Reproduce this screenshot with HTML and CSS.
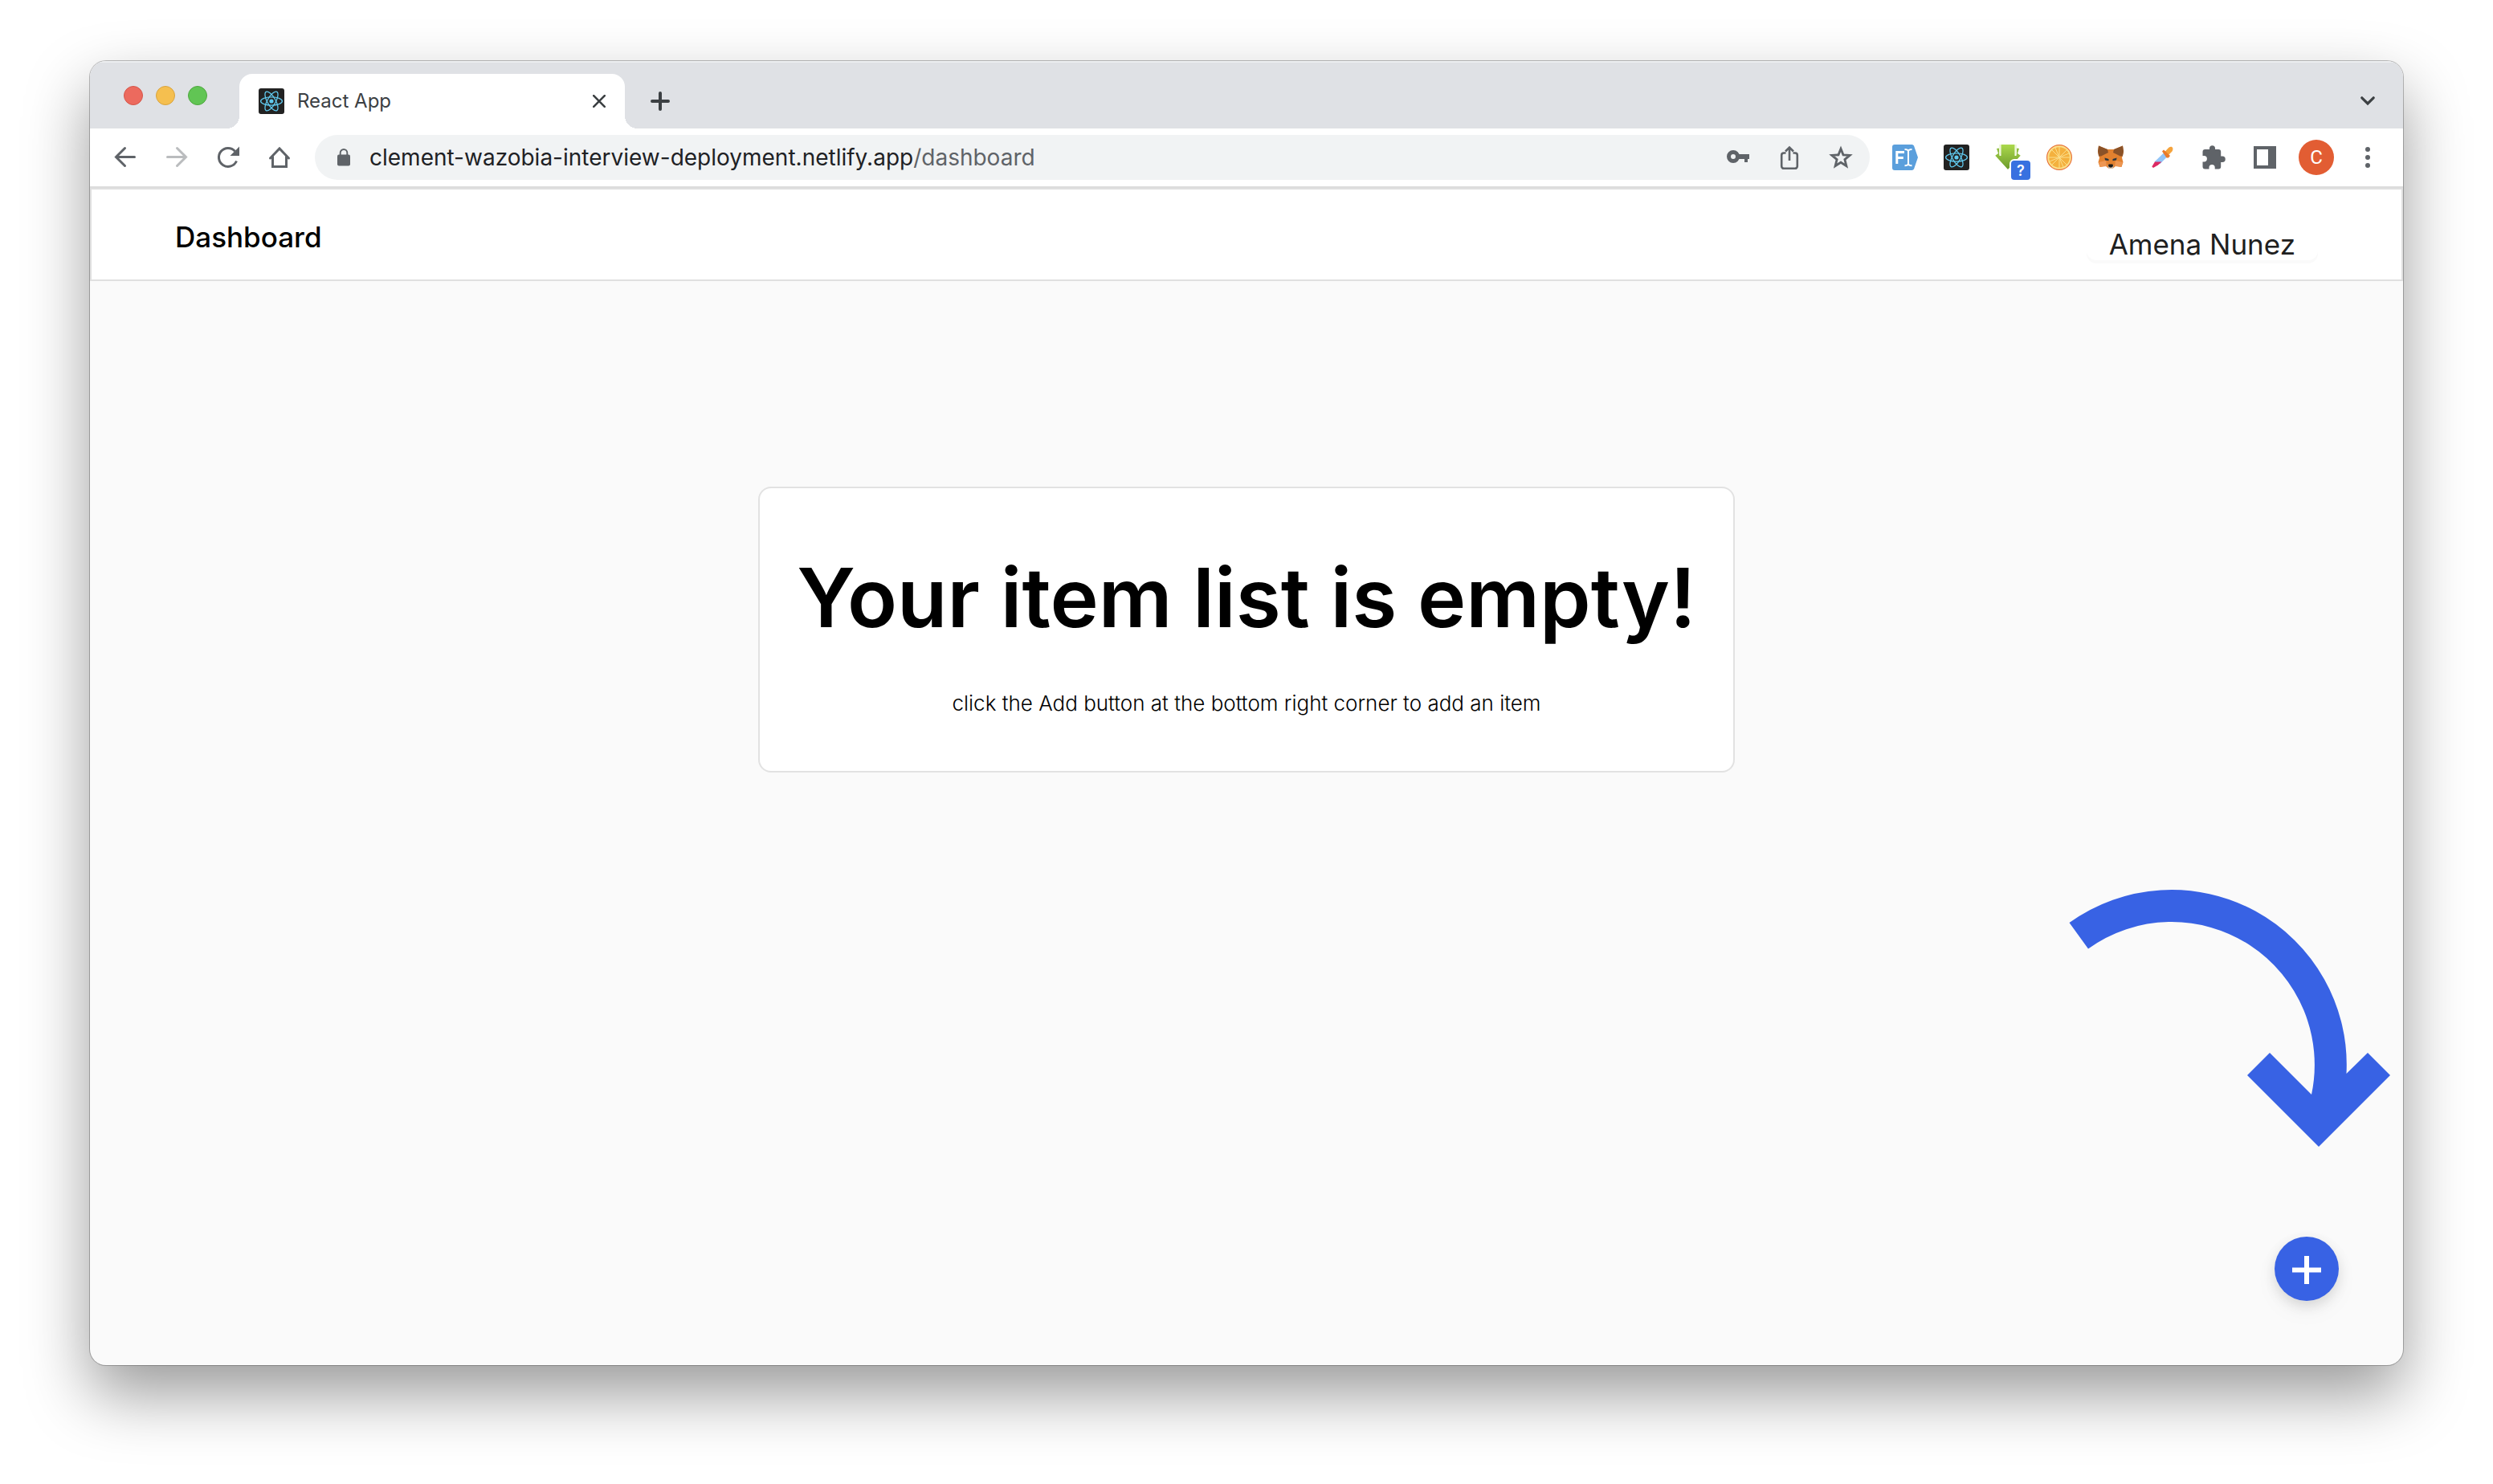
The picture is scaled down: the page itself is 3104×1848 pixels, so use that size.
FILE: index.html
```html
<!DOCTYPE html>
<html lang="en">
<head>
<meta charset="utf-8">
<title>React App</title>
<link rel="stylesheet" href="styles.css">
</head>
<body>
<svg class="sprite" aria-hidden="true">
  <symbol id="react-logo" viewBox="0 0 32 32">
    <rect width="32" height="32" rx="3" fill="#222"/>
    <circle cx="16" cy="16" r="2.6" fill="#61c9ee"/>
    <g fill="none" stroke="#61c9ee" stroke-width="1.3">
      <ellipse cx="16" cy="16" rx="13.4" ry="5.1"/>
      <ellipse cx="16" cy="16" rx="13.4" ry="5.1" transform="rotate(60 16 16)"/>
      <ellipse cx="16" cy="16" rx="13.4" ry="5.1" transform="rotate(120 16 16)"/>
    </g>
  </symbol>
</svg>
<div class="window">
  <div class="tab-strip">
    <div class="lights">
      <button class="light light-close" aria-label="Close window"></button>
      <button class="light light-min" aria-label="Minimise window"></button>
      <button class="light light-max" aria-label="Zoom window"></button>
    </div>
    <div class="tab">
      <svg class="icon-32"><use href="#react-logo"/></svg>
      <span class="tab-title">React App</span>
      <button class="tab-close" aria-label="Close tab">
        <svg width="16" height="16" viewBox="0 0 16 16"><path d="M1.2 1.2 14.8 14.8M14.8 1.2 1.2 14.8" stroke="#3c4043" stroke-width="2.6" stroke-linecap="round"/></svg>
      </button>
    </div>
    <button class="strip-button" aria-label="New tab">
      <svg width="24" height="24" viewBox="0 0 24 24"><path d="M12 2v20M2 12h20" stroke="#3c4043" stroke-width="4" stroke-linecap="round"/></svg>
    </button>
    <button class="strip-button tab-search" aria-label="Search tabs">
      <svg width="18" height="12" viewBox="0 0 18 12"><path d="M1.8 1.8 9 9l7.200-7.200" fill="none" stroke="#3c4043" stroke-width="3.200" stroke-linecap="round"/></svg>
    </button>
  </div>

  <div class="toolbar">
    <button class="tool" aria-label="Back">
      <svg width="32" height="32" viewBox="0 0 32 32"><path d="M27.500 15.500H4.500M15.500 4.500l-11 11 11 11" fill="none" stroke="#5f6368" stroke-width="3" stroke-linecap="round"/></svg>
    </button>
    <button class="tool" aria-label="Forward">
      <svg width="32" height="32" viewBox="0 0 32 32"><path d="M4.500 15.500h23M16.500 4.500l11 11-11 11" fill="none" stroke="#babcbe" stroke-width="3" stroke-linecap="round"/></svg>
    </button>
    <button class="tool" aria-label="Reload">
      <svg width="32" height="32" viewBox="0 0 32 32"><path d="M26.500 20.500A11.500 11.500 0 1 1 24.500 8.200" fill="none" stroke="#5f6368" stroke-width="3"/><path d="M30 2.500V14H18.500z" fill="#5f6368"/></svg>
    </button>
    <button class="tool" aria-label="Home">
      <svg width="32" height="32" viewBox="0 0 32 32"><path d="M4.500 17 16 5l11.500 12M7.500 15v12.500h17V15" fill="none" stroke="#5f6368" stroke-width="3" stroke-linecap="round" stroke-linejoin="miter"/></svg>
    </button>
    <div class="omnibox">
      <svg class="lock" width="16" height="22" viewBox="0 0 16 22"><path d="M3.700 9V5.300a4.300 4.300 0 0 1 8.600 0V9" fill="none" stroke="#5f6368" stroke-width="1.900"/><rect y="7.500" width="16" height="14" rx="2" fill="#5f6368"/></svg>
      <div class="url" role="textbox" aria-label="Address" contenteditable="true" spellcheck="false">clement-wazobia-interview-deployment.netlify.app<span class="url-path">/dashboard</span></div>
      <button class="tool" aria-label="Passwords">
        <svg width="32" height="32" viewBox="0 0 32 32"><circle cx="10" cy="15" r="5.500" fill="none" stroke="#5f6368" stroke-width="5"/><path d="M16 12h14v6h-2v4h-4v-4h-8z" fill="#5f6368"/></svg>
      </button>
      <button class="tool" aria-label="Share">
        <svg width="32" height="32" viewBox="0 0 32 32"><g fill="none" stroke="#5f6368" stroke-width="2.600"><path d="M11.500 10.500H9A2.800 2.800 0 0 0 6.200 13.300V27A2.800 2.800 0 0 0 9 29.800H23A2.800 2.800 0 0 0 25.800 27V13.300A2.800 2.800 0 0 0 23 10.500H20.500M16 20V4M11 8.500 16 3.500 21 8.500"/></g></svg>
      </button>
      <button class="tool" aria-label="Bookmark this tab">
        <svg width="32" height="32" viewBox="0 0 32 32"><path d="M16 5.200 19 12.800 27.200 13.400 20.900 18.600 22.900 26.600 16 22.200 9.100 26.600 11.100 18.600 4.800 13.400 13 12.800z" fill="none" stroke="#5f6368" stroke-width="2.800"/></svg>
      </button>
    </div>
    <div class="extensions">
      <button class="tool" aria-label="Font finder">
        <svg width="32" height="32" viewBox="0 0 32 32"><path d="M3 0H24.500a3 3 0 0 1 2.500 1.500L32 16 27 30.500a3 3 0 0 1-2.500 1.500H3a3 3 0 0 1-3-3V3a3 3 0 0 1 3-3z" fill="#5b9fdc"/><path d="M5.800 24V9.500H15M5.800 16.500h8" fill="none" stroke="#fff" stroke-width="3"/><path d="M15.500 6c3 0 4 .5 4.500 2 .5-1.500 1.500-2 4.500-2M20 8v16M15.500 26.200c3 0 4-.5 4.500-2 .5 1.500 1.500 2 4.500 2" fill="none" stroke="#fff" stroke-width="2"/></svg>
      </button>
      <button class="tool" aria-label="React developer tools">
        <svg class="icon-32"><use href="#react-logo"/></svg>
      </button>
      <button class="tool" aria-label="Download manager">
        <svg width="32" height="32" viewBox="0 0 32 32"><defs><linearGradient id="leaf" x2="0" y2="1"><stop offset="0" stop-color="#abd94c"/><stop offset="1" stop-color="#6c9a2b"/></linearGradient></defs><path d="M2 5 5.500 4.500V14H0L4 11zM30 5 26.500 4.500V14H32L28 11z" fill="#8fbd3f"/><path d="M7.500 0h17v14h7L16 31 .5 14h7z" fill="url(#leaf)"/><path d="M6 0v12.500M26 0v12.500" stroke="#eef7da" stroke-width="2"/></svg>
        <span class="badge">?</span>
      </button>
      <button class="tool" aria-label="Orange">
        <svg width="32" height="32" viewBox="0 0 32 32"><circle cx="16" cy="16" r="15.400" fill="#fbe08a" stroke="#e8743b" stroke-width="1.200"/><circle cx="16" cy="16" r="12.800" fill="#f4b13e"/><path d="M16 3v26M3 16h26M6.800 6.800l18.400 18.400M25.200 6.800 6.800 25.200M11 4l10 24M4 21 28 11" stroke="#fbdf8d" stroke-width="1"/></svg>
      </button>
      <button class="tool" aria-label="Wallet">
        <svg width="32" height="32" viewBox="0 0 32 32"><path d="M1 1.500 12 6h8l11-4.500 1 8-2 7 1.500 5.500-2 6-7-1.500-3.500 3h-6l-3.500-3-7 1.500-2-6L2 16.500 0 9.500z" fill="#e2812f"/><path d="M1 1.500 12 6 13 10 4 14.500 1 14.500 0 8zM31 1.500 20 6 19 10 28 14.500 31 14.500 32 8z" fill="#8a5228"/><path d="M1 22 10 20 11 27 3 28zM31 22 22 20 21 27 29 28z" fill="#ed9652"/><path d="M8.500 16.500 13.500 18v2.200L9 19.500zM23.500 16.500 18.500 18v2.200L23 19.500z" fill="#2b3640"/><path d="M12.500 25.500h7l-.5 4h-6z" fill="#c7bdb3"/><path d="M13.500 24.500h5l.5 2.500-2 1.500h-2L13 27z" fill="#1c1a18"/></svg>
      </button>
      <button class="tool" aria-label="Colour picker">
        <svg width="32" height="32" viewBox="0 0 32 32"><path d="M18 10.500 22.500 15 13.500 24H9L6.500 21.500z" fill="#93c5f7"/><path d="M7 21.500h8.500L11 25.500 5 29 3.300 27.500z" fill="#dc2a63"/><path d="M19 9.500 24 4c4-3 7 0 4.500 4.500L23.500 13.500z" fill="#f5a33c"/><path d="M16 8.500 18 6.500l8 7.500-2 2.500-2.500 0z" fill="#ea7b2b"/></svg>
      </button>
      <button class="tool" aria-label="Extensions">
        <svg width="32" height="32" viewBox="0 0 32 32"><path d="M27 14.500h-1.800V9a3 3 0 0 0-3-3H18V4.700a3.500 3.500 0 0 0-7 0V6H5.500a3 3 0 0 0-3 3v5h1.700a3.700 3.700 0 0 1 0 7.400H2.500v6a3 3 0 0 0 3 3h5v-1.800a3.600 3.600 0 0 1 7.200 0v1.800h4.500a3 3 0 0 0 3-3v-5.400H27a3.700 3.700 0 0 0 0-7.500z" fill="#5f6368"/></svg>
      </button>
      <button class="tool" aria-label="Side panel">
        <svg width="32" height="32" viewBox="0 0 32 32"><path fill-rule="evenodd" d="M2 2h28v28H2zM6 6v20h14V6z" fill="#5f6368"/></svg>
      </button>
      <button class="tool" aria-label="Profile"><span class="avatar">C</span></button>
      <button class="tool" aria-label="Menu">
        <svg width="32" height="32" viewBox="0 0 32 32"><g fill="#5f6368"><circle cx="16" cy="6" r="3"/><circle cx="16" cy="16" r="3"/><circle cx="16" cy="26" r="3"/></g></svg>
      </button>
    </div>
  </div>

  <header class="header">
    <h2 class="title">Dashboard</h2>
    <button class="user">Amena Nunez</button>
  </header>

  <main class="main">
    <section class="card">
      <h1 class="headline">Your item list is empty!</h1>
      <p class="hint">click the Add button at the bottom right corner to add an item</p>
    </section>
    <div class="add-area">
      <svg class="arrow" width="400" height="321" viewBox="0 0 400 321" aria-hidden="true"><path d="M.5 42A218 218 0 0 1 345.500 230L372 204 400 232 311 321 222 232 250 204 302 256A178 178 0 0 0 24 74.500z" fill="#3862e4"/></svg>
      <button class="add" aria-label="Add item">
        <svg width="36" height="36" viewBox="0 0 36 36"><path d="M18 0v35M0 17.500h36" stroke="#fff" stroke-width="6"/></svg>
      </button>
    </div>
  </main>
</div>
</body>
</html>
```
FILE: styles.css
```css
* {
  box-sizing: border-box;
}

body {
  margin: 0;
  padding: 76px 112px 148px;
  background: #fff;
  color: #000;
  font-family: Inter, "Liberation Sans", sans-serif;
}

h1, h2, p {
  margin: 0;
}

button {
  margin: 0;
  padding: 0;
  border: 0;
  background: none;
  color: inherit;
  font: inherit;
}

svg {
  display: block;
  flex: none;
}

.sprite {
  position: absolute;
  width: 0;
  height: 0;
}

.icon-32 {
  width: 32px;
  height: 32px;
}

.window {
  display: flex;
  flex-direction: column;
  min-height: calc(100vh - 224px);
  overflow: hidden;
  border-radius: 20px;
  background: #fafafa;
  box-shadow: 0 0 0 1px rgba(0, 0, 0, 0.25), 0 36px 80px rgba(0, 0, 0, 0.4);
}

/* Tab strip */
.tab-strip {
  display: flex;
  align-items: flex-end;
  padding: 16px 12px 0 42px;
  background: #dfe1e5;
  box-shadow: inset 0 2px 0 #eceef0;
}

.lights {
  display: flex;
  gap: 16px;
  margin-right: 40px;
  padding-bottom: 29px;
}

.light {
  width: 24px;
  height: 24px;
  border: 1px solid;
  border-radius: 50%;
}

.light-close {
  border-color: #d55549;
  background: #ec6a5e;
}

.light-min {
  border-color: #d9a33c;
  background: #f5bf4f;
}

.light-max {
  border-color: #4fa73f;
  background: #61c554;
}

.tab {
  position: relative;
  display: flex;
  align-items: center;
  width: 480px;
  height: 68px;
  padding: 0 24px;
  border-radius: 16px 16px 0 0;
  background: #fff;
}

.tab::before,
.tab::after {
  position: absolute;
  bottom: 0;
  width: 16px;
  height: 16px;
  content: "";
}

.tab::before {
  right: 100%;
  background: radial-gradient(circle at 0 0, transparent 16px, #fff 16px);
}

.tab::after {
  left: 100%;
  background: radial-gradient(circle at 100% 0, transparent 16px, #fff 16px);
}

.tab-title {
  flex: 1;
  margin-left: 16px;
  color: #3c4043;
  font-size: 24px;
  line-height: 32px;
}

.strip-button {
  display: grid;
  place-items: center;
  width: 56px;
  height: 68px;
  margin-left: 16px;
}

.tab-search {
  width: 64px;
  margin-left: auto;
}

/* Toolbar */
.toolbar {
  display: flex;
  align-items: center;
  height: 74px;
  padding: 0 12px;
  border-bottom: 2px solid #dcdcdc;
  background: #fff;
}

.tool {
  position: relative;
  display: grid;
  flex: none;
  place-items: center;
  width: 64px;
  height: 56px;
}

.omnibox {
  display: flex;
  flex: 1;
  align-items: center;
  height: 56px;
  margin: 0 12px;
  padding: 0 4px 0 28px;
  border-radius: 28px;
  background: #f1f3f4;
}

.url {
  flex: 1;
  margin-left: 24px;
  color: #202124;
  font-size: 28px;
  line-height: 36px;
  white-space: nowrap;
}

.url-path {
  color: #5f6368;
}

.extensions {
  display: flex;
}

.badge {
  position: absolute;
  right: 4px;
  bottom: 0;
  width: 24px;
  height: 24px;
  border-radius: 4px;
  background: #3871e0;
  box-shadow: 0 0 0 2px #fff;
  color: #fff;
  font-size: 18px;
  font-weight: 600;
  line-height: 26px;
  text-align: center;
}

.avatar {
  width: 44px;
  height: 44px;
  border-radius: 50%;
  background: #e25d33;
  color: #fff;
  font-family: Roboto, sans-serif;
  font-size: 24px;
  line-height: 44px;
  text-align: center;
}

/* Page header */
.header {
  display: flex;
  align-items: flex-start;
  justify-content: space-between;
  padding: 36px 104px 24px;
  border: 2px solid #e0e0e0;
  background: #fff;
}

.title {
  font-size: 35px;
  font-weight: 500;
  line-height: 46px;
}

.user {
  margin-top: 12px;
  padding: 0 28px;
  border-radius: 12px;
  background: #fff;
  box-shadow: 0 4px 0 #fafafa;
  color: #202020;
  font-size: 35px;
  line-height: 40px;
}

/* Page body */
.main {
  display: flex;
  flex: 1;
  flex-direction: column;
  align-items: center;
  justify-content: space-between;
  padding: 256px 16px 80px;
}

.card {
  padding: 72px 46px 64px;
  border: 2px solid #e2e2e2;
  border-radius: 16px;
  background: #fff;
  text-align: center;
}

.headline {
  font-size: 102px;
  font-weight: 600;
  line-height: 128px;
}

.hint {
  margin-top: 48px;
  font-size: 26px;
  font-weight: 300;
  line-height: 40px;
}

.add-area {
  display: flex;
  flex-direction: column;
  align-items: flex-end;
  align-self: flex-end;
  gap: 112px;
}

.add {
  display: grid;
  place-items: center;
  width: 80px;
  height: 80px;
  margin-right: 64px;
  padding-top: 4px;
  border-radius: 50%;
  background: #3862e4;
  box-shadow: 0 6px 16px rgba(0, 0, 0, 0.12), 0 12px 32px rgba(0, 0, 0, 0.04);
}
```
